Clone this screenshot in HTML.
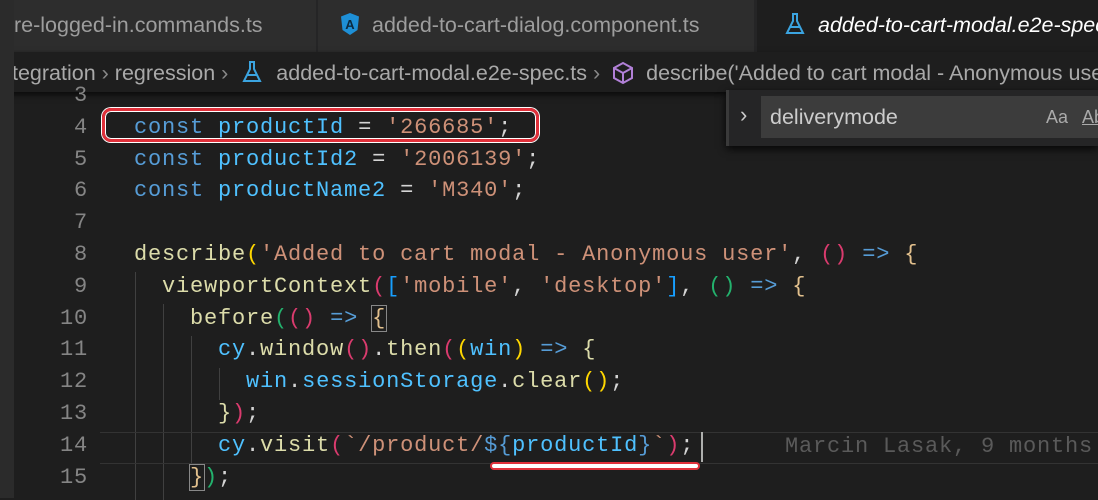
<!DOCTYPE html>
<html><head><meta charset="utf-8"><style>
*{margin:0;padding:0;box-sizing:border-box}
body{width:1098px;height:498px;overflow:hidden;background:#1e1e1e;position:relative;font-family:"Liberation Sans",sans-serif}
.abs{position:absolute}
.tabs{left:0;top:0;width:1098px;height:52px;background:#252526}
.tab{top:0;height:52px;background:#2d2d2d;color:#9d9d9d;font-size:21.5px;line-height:50px;white-space:nowrap;overflow:hidden}
.crumb{left:0;top:52px;width:1098px;height:40px;background:#1e1e1e;color:#a9a9a9;font-size:21.5px;line-height:42px;white-space:nowrap;box-shadow:0 3px 6px #000a}
.code{font-family:"Liberation Mono",monospace;font-size:22px;letter-spacing:0.8px;white-space:pre;line-height:31.8px}
.ln{color:#858585;width:88px;text-align:right}
.k{color:#569cd6}.v{color:#4fc1ff}.s{color:#ce9178}.f{color:#dcdcaa}.p{color:#d4d4d4}
.y{color:#ffd700}.r{color:#da3b6e}.b{color:#179fff}.g{color:#23b26d}.br{color:#e2c08d}
.guide{width:1px;background:#404040}
</style></head><body>
<div class="abs" style="left:0;top:0;width:14px;height:498px;background:#2b2b2b;z-index:5"></div>
<div class="abs tabs"></div>
<div class="abs tab" style="left:14px;width:302px;padding-left:0">re-logged-in.commands.ts</div>
<div class="abs tab" style="left:318px;width:436px;padding-left:22px"><svg width="20" height="24" viewBox="0 0 20 24" style="vertical-align:-4px;margin-right:12px"><path d="M10 1 L19 4.5 L17.5 18 L10 23 L2.5 18 L1 4.5Z" fill="#1e8fd6"/><text x="10" y="17" font-size="13" font-family="Liberation Sans" fill="#0b2a40" text-anchor="middle" font-weight="bold">A</text></svg>added-to-cart-dialog.component.ts</div>
<div class="abs tab" style="left:757px;width:341px;background:#1e1e1e;color:#fff;font-style:italic;padding-left:28px"><svg width="20" height="24" viewBox="0 0 20 24" style="vertical-align:-4px;margin-right:13px"><path d="M7 2 H13 M8 2 V9 L2 21 H18 L12 9 V2 M5 15 H15" fill="none" stroke="#3ba4e0" stroke-width="2"/></svg>added-to-cart-modal.e2e-spec.ts</div>
<div class="abs crumb"><span style="margin-left:12px">tegration</span> <span style="color:#888">›</span> regression <span style="color:#888">›</span> <svg width="20" height="24" viewBox="0 0 20 24" style="vertical-align:-4px;margin:0 8px"><path d="M7 2 H13 M8 2 V9 L2 21 H18 L12 9 V2 M5 15 H15" fill="none" stroke="#3ba4e0" stroke-width="2"/></svg> added-to-cart-modal.e2e-spec.ts <span style="color:#888">›</span> <svg width="22" height="24" viewBox="0 0 22 24" style="vertical-align:-5px;margin:0 6px"><path d="M11 2 L20 7 V17 L11 22 L2 17 V7Z M2 7 L11 12 L20 7 M11 12 V22" fill="none" stroke="#b180d7" stroke-width="2"/></svg> describe('Added to cart modal - Anonymous user'</div>

<div class="abs guide" style="left:135px;top:272px;height:228px"></div>
<div class="abs guide" style="left:163px;top:304px;height:196px"></div>
<div class="abs guide" style="left:191px;top:336px;height:128px"></div>
<div class="abs guide" style="left:219px;top:368px;height:32px"></div>
<div class="abs" style="left:100px;top:432px;width:998px;height:32px;border-top:1px solid #333;border-bottom:1px solid #333"></div>

<div class="abs code ln" style="left:0;top:80px">3
4
5
6
7
8
9
10
11
12
13
14
15</div>
<div class="abs code" style="left:134px;top:80px">
<span class="k">const</span> <span class="v">productId</span> <span class="p">=</span> <span class="s">'266685'</span><span class="p">;</span>
<span class="k">const</span> <span class="v">productId2</span> <span class="p">=</span> <span class="s">'2006139'</span><span class="p">;</span>
<span class="k">const</span> <span class="v">productName2</span> <span class="p">=</span> <span class="s">'M340'</span><span class="p">;</span>

<span class="f">describe</span><span class="y">(</span><span class="s">'Added to cart modal - Anonymous user'</span><span class="p">,</span> <span class="r">()</span> <span class="k">=&gt;</span> <span class="br">{</span>
  <span class="f">viewportContext</span><span class="r">(</span><span class="b">[</span><span class="s">'mobile'</span><span class="p">,</span> <span class="s">'desktop'</span><span class="b">]</span><span class="p">,</span> <span class="g">()</span> <span class="k">=&gt;</span> <span class="br">{</span>
    <span class="f">before</span><span class="g">(</span><span class="r">()</span> <span class="k">=&gt;</span> <span class="br" style="outline:1px solid #888">{</span>
      <span class="v">cy</span><span class="p">.</span><span class="f">window</span><span class="r">()</span><span class="p">.</span><span class="f">then</span><span class="r">(</span><span class="y">(</span><span class="v">win</span><span class="y">)</span> <span class="k">=&gt;</span> <span class="f">{</span>
        <span class="v">win</span><span class="p">.</span><span class="v">sessionStorage</span><span class="p">.</span><span class="f">clear</span><span class="y">()</span><span class="p">;</span>
      <span class="f">}</span><span class="r">)</span><span class="p">;</span>
      <span class="v">cy</span><span class="p">.</span><span class="f">visit</span><span class="r">(</span><span class="s">`/product/</span><span class="k">${</span><span class="v">productId</span><span class="k">}</span><span class="s">`</span><span class="r">)</span><span class="p">;</span>
    <span class="br" style="outline:1px solid #888">}</span><span class="g">)</span><span class="p">;</span></div>
<div class="abs" style="left:701px;top:432px;width:2px;height:30px;background:#aeafad"></div>
<div class="abs code" style="left:785px;top:431px;color:#5a5a5a">Marcin Lasak, 9 months ago</div>

<div class="abs" style="left:102px;top:108px;width:437px;height:34px;border:3px solid #e0303a;border-radius:9px;box-shadow:inset 0 0 0 1px #fff,0 0 0 1px #fff"></div>
<div class="abs" style="left:490px;top:462px;width:210px;height:8px;border:2px solid #e0303a;background:#fff;border-radius:5px"></div>

<div class="abs" style="left:726px;top:90px;width:372px;height:56px;background:#252526;border-left:3px solid #3a3a3a;box-shadow:0 3px 8px #000c"></div>
<div class="abs" style="left:740px;top:102px;color:#ccc;font-size:22px">›</div>
<div class="abs" style="left:761px;top:96px;width:337px;height:42px;background:#3c3c3c;color:#ccc;font-size:21.5px;line-height:42px;padding-left:9px">deliverymode<span style="position:absolute;left:285px;color:#aaa;font-size:18px">Aa</span><span style="position:absolute;left:321px;color:#aaa;font-size:18px;text-decoration:underline">Ab</span></div>
</body></html>
